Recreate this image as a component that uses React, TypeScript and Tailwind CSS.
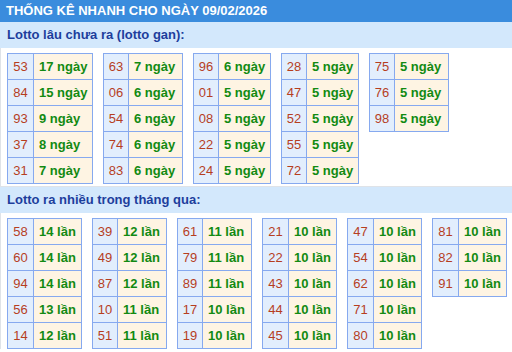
type Table = { cols: string; rows: string[][] };

export default function App() {
  const gan: Table[] = [
    { cols: 'grid-cols-[26px_59px]', rows: [['53', '17 ngày'], ['84', '15 ngày'], ['93', '9 ngày'], ['37', '8 ngày'], ['31', '7 ngày']] },
    { cols: 'grid-cols-[25px_54px]', rows: [['63', '7 ngày'], ['06', '6 ngày'], ['54', '6 ngày'], ['74', '6 ngày'], ['83', '6 ngày']] },
    { cols: 'grid-cols-[25px_52px]', rows: [['96', '6 ngày'], ['01', '5 ngày'], ['08', '5 ngày'], ['22', '5 ngày'], ['24', '5 ngày']] },
    { cols: 'grid-cols-[25px_52px]', rows: [['28', '5 ngày'], ['47', '5 ngày'], ['52', '5 ngày'], ['55', '5 ngày'], ['72', '5 ngày']] },
    { cols: 'grid-cols-[25px_54px]', rows: [['75', '5 ngày'], ['76', '5 ngày'], ['98', '5 ngày']] },
  ];

  const nhieu: Table[] = [
    { cols: 'grid-cols-[26px_48px]', rows: [['58', '14 lần'], ['60', '14 lần'], ['94', '14 lần'], ['56', '13 lần'], ['14', '12 lần']] },
    { cols: 'grid-cols-[25px_49px]', rows: [['39', '12 lần'], ['49', '12 lần'], ['87', '12 lần'], ['10', '11 lần'], ['51', '11 lần']] },
    { cols: 'grid-cols-[25px_49px]', rows: [['61', '11 lần'], ['79', '11 lần'], ['89', '11 lần'], ['17', '10 lần'], ['19', '10 lần']] },
    { cols: 'grid-cols-[26px_48px]', rows: [['21', '10 lần'], ['22', '10 lần'], ['43', '10 lần'], ['44', '10 lần'], ['45', '10 lần']] },
    { cols: 'grid-cols-[26px_48px]', rows: [['47', '10 lần'], ['54', '10 lần'], ['62', '10 lần'], ['71', '10 lần'], ['80', '10 lần']] },
    { cols: 'grid-cols-[26px_48px]', rows: [['81', '10 lần'], ['82', '10 lần'], ['91', '10 lần']] },
  ];

  const renderTable = (t: Table, i: number) => (
    <div key={i} className={`grid ${t.cols} border-l border-t border-[#86a9ef]`}>
      {t.rows.map(([num, val]) => (
        <div key={num} className="contents">
          <div className="h-[26px] flex items-center justify-center bg-[#e2eefd] border-r border-b border-[#86a9ef] text-[#b63e1f]">
            {num}
          </div>
          <div className="h-[26px] pl-[5px] flex items-center whitespace-nowrap bg-[#fef4e3] border-r border-b border-[#86a9ef] font-bold text-[#128a12]">
            {val}
          </div>
        </div>
      ))}
    </div>
  );

  return (
    <div className="w-[512px] h-[352px] overflow-hidden bg-white text-[13px] font-['Liberation_Sans',Arial,sans-serif]">
      <div className="h-[22px] bg-[#3a8cdd] pl-[6px] leading-[22px] font-bold text-white">
        THỐNG KÊ NHANH CHO NGÀY 09/02/2026
      </div>

      {/* Lotto gan */}
      <div className="h-[26px] bg-[#d3e8fc] pl-[7px] leading-[26px] font-bold text-[#1d3e9c]">
        Lotto lâu chưa ra (lotto gan):
      </div>
      <div className="border-l border-b border-[#dfe3e8] pl-[6px] pt-[5px] pb-[2px] flex flex-wrap items-start gap-x-[10px]">
        {gan.map(renderTable)}
      </div>

      {/* Lotto ra nhieu */}
      <div className="h-[26px] bg-[#d3e8fc] pl-[7px] leading-[26px] font-bold text-[#1d3e9c]">
        Lotto ra nhiều trong tháng qua:
      </div>
      <div className="border-l border-[#dfe3e8] pl-[6px] pt-[5px] flex flex-wrap items-start gap-x-[10px]">
        {nhieu.map(renderTable)}
      </div>
    </div>
  );
}
